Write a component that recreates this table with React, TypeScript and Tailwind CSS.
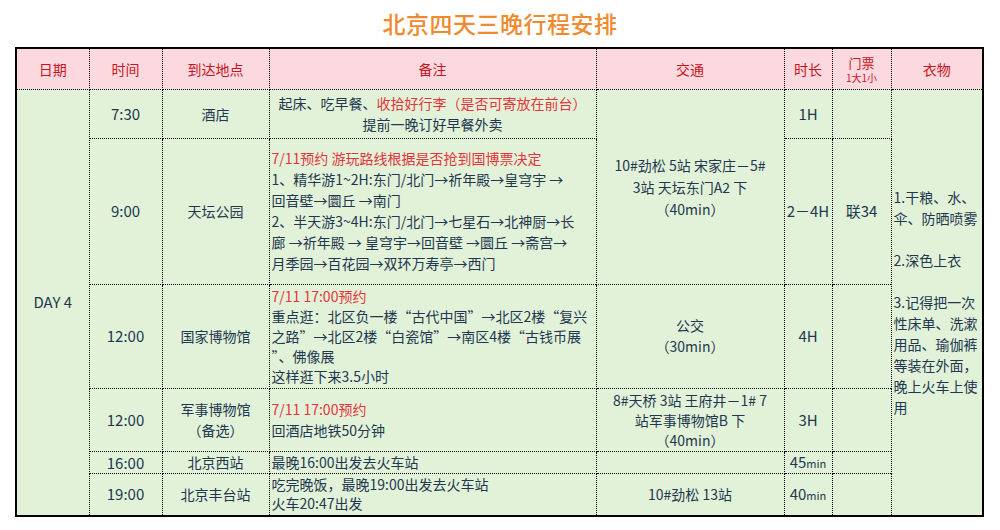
const font = { fontFamily: '"Noto Sans CJK SC", "Noto Sans", sans-serif' }

const td = 'border border-dotted border-black p-0 align-middle'
const navy = 'text-[#22374f]'
const red = 'text-[#e5343c]'

function Lines({ lines, lh = 'h-[21px]' }: { lines: (string | { red: string })[]; lh?: string }) {
  return (
    <div>
      {lines.map((l, i) =>
        typeof l === 'string' ? (
          <div key={i} className={`whitespace-nowrap ${lh}`}>{l || '\u00a0'}</div>
        ) : (
          <div key={i} className={`whitespace-nowrap ${lh} ${red}`}>{l.red}</div>
        )
      )}
    </div>
  )
}

export default function App() {
  return (
    <div className="w-[1000px] h-[530px] bg-white overflow-hidden" style={font}>
      <div className="h-[47px] flex items-center justify-center text-[23px] font-medium text-[#f08a2e] tracking-[0.5px]">
        北京四天三晚行程安排
      </div>
      <div className="pl-[15px]">
        <table className={`table-fixed border-collapse border-2 border-solid border-black w-[967px] text-[14px] leading-[20px] ${navy}`}>
          <colgroup>
            <col className="w-[73px]" />
            <col className="w-[73px]" />
            <col className="w-[107px]" />
            <col className="w-[327px]" />
            <col className="w-[188px]" />
            <col className="w-[48px]" />
            <col className="w-[59px]" />
            <col className="w-[92px]" />
          </colgroup>
          <tbody>
            <tr className="h-[41px] bg-[#fcd9de] text-[#c8141e] text-center">
              <td className={td}>日期</td>
              <td className={td}>时间</td>
              <td className={td}>到达地点</td>
              <td className={td}>备注</td>
              <td className={td}>交通</td>
              <td className={td}>时长</td>
              <td className={td}>
                <div className="leading-[17px] text-[13px]">门票</div>
                <div className="text-[10px] leading-[13px]">1大1小</div>
              </td>
              <td className={td}>衣物</td>
            </tr>
            <tr className="h-[49px] bg-[#e2f2d9] text-center">
              <td className={`${td} text-[15px]`} rowSpan={6}>DAY 4</td>
              <td className={`${td} text-[15px]`}>7:30</td>
              <td className={td}>酒店</td>
              <td className={td}>
                <div className="whitespace-nowrap leading-[21px]">
                  起床、吃早餐、<span className={red}>收拾好行李（是否可寄放在前台）</span>
                </div>
                <div className="leading-[21px]">提前一晚订好早餐外卖</div>
              </td>
              <td className={td} rowSpan={2}>
                <div className="leading-[22px]">
                  <div>10#劲松 5站 宋家庄－5#</div>
                  <div>3站 天坛东门A2 下</div>
                  <div>（40min）</div>
                </div>
              </td>
              <td className={`${td} text-[15px]`}>1H</td>
              <td className={td}></td>
              <td className={`${td} text-left pl-[2px]`} rowSpan={6}>
                <Lines
                  lines={[
                    '1.干粮、水、',
                    '伞、防晒喷雾',
                    '',
                    '2.深色上衣',
                    '',
                    '3.记得把一次',
                    '性床单、洗漱',
                    '用品、瑜伽裤',
                    '等装在外面，',
                    '晚上火车上使',
                    '用',
                  ]}
                />
              </td>
            </tr>
            <tr className="h-[146px] bg-[#e2f2d9] text-center">
              <td className={`${td} text-[15px]`}>9:00</td>
              <td className={td}>天坛公园</td>
              <td className={`${td} text-left pl-[2px]`}>
                <Lines
                  lines={[
                    { red: '7/11预约 游玩路线根据是否抢到国博票决定' },
                    '1、精华游1~2H:东门/北门→祈年殿→皇穹宇 →',
                    '回音壁→圜丘 →南门',
                    '2、半天游3~4H:东门/北门→七星石→北神厨→长',
                    '廊 →祈年殿 → 皇穹宇→回音壁 →圜丘 →斋宫→',
                    '月季园→百花园→双环万寿亭→西门',
                  ]}
                />
              </td>
              <td className={`${td} text-[15px]`}>2－4H</td>
              <td className={`${td} text-[15px]`}>联34</td>
            </tr>
            <tr className="h-[104px] bg-[#e2f2d9] text-center">
              <td className={`${td} text-[15px]`}>12:00</td>
              <td className={td}>国家博物馆</td>
              <td className={`${td} text-left pl-[2px]`}>
                <Lines
                  lh="h-[20px]"
                  lines={[
                    { red: '7/11 17:00预约' },
                    '重点逛：北区负一楼“古代中国”→北区2楼“复兴',
                    '之路”→北区2楼“白瓷馆”→南区4楼“古钱币展',
                    '”、佛像展',
                    '这样逛下来3.5小时',
                  ]}
                />
              </td>
              <td className={td}>
                <div className="leading-[21px]">公交</div>
                <div className="leading-[21px]">（30min）</div>
              </td>
              <td className={`${td} text-[15px]`}>4H</td>
              <td className={td}></td>
            </tr>
            <tr className="h-[63px] bg-[#e2f2d9] text-center">
              <td className={`${td} text-[15px]`}>12:00</td>
              <td className={td}>
                <div className="leading-[21px]">军事博物馆</div>
                <div className="leading-[21px]">（备选）</div>
              </td>
              <td className={`${td} text-left pl-[2px]`}>
                <Lines lines={[{ red: '7/11 17:00预约' }, '回酒店地铁50分钟']} />
              </td>
              <td className={td}>
                <div className="leading-[20px]">
                  <div>8#天桥 3站 王府井－1# 7</div>
                  <div>站军事博物馆B 下</div>
                  <div>（40min）</div>
                </div>
              </td>
              <td className={`${td} text-[15px]`}>3H</td>
              <td className={td}></td>
            </tr>
            <tr className="h-[21px] bg-[#e2f2d9] text-center">
              <td className={`${td} text-[15px] leading-[19px]`}>16:00</td>
              <td className={`${td} leading-[19px]`}>北京西站</td>
              <td className={`${td} text-left pl-[2px] leading-[19px]`}>最晚16:00出发去火车站</td>
              <td className={td}></td>
              <td className={`${td} text-[15px] leading-[19px]`}>
                45<span className="text-[11px]">min</span>
              </td>
              <td className={td}></td>
            </tr>
            <tr className="h-[43px] bg-[#e2f2d9] text-center">
              <td className={`${td} text-[15px]`}>19:00</td>
              <td className={td}>北京丰台站</td>
              <td className={`${td} text-left pl-[2px]`}>
                <div className="leading-[19px]">
                  <div>吃完晚饭，最晚19:00出发去火车站</div>
                  <div>火车20:47出发</div>
                </div>
              </td>
              <td className={td}>10#劲松 13站</td>
              <td className={`${td} text-[15px]`}>
                40<span className="text-[11px]">min</span>
              </td>
              <td className={td}></td>
            </tr>
          </tbody>
        </table>
      </div>
    </div>
  )
}
